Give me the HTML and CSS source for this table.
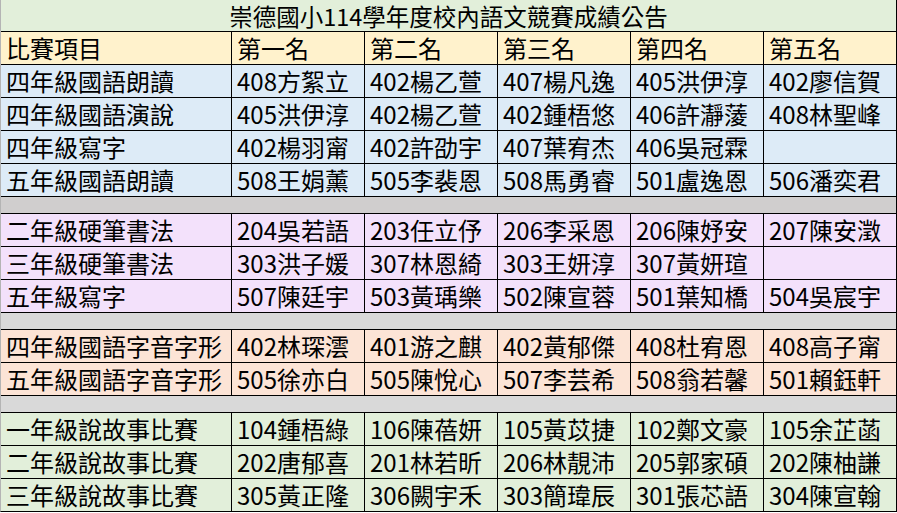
FILE: index.html
```html
<!DOCTYPE html>
<html lang="zh-Hant">
<head>
<meta charset="utf-8">
<title>崇德國小114學年度校內語文競賽成績公告</title>
<link rel="stylesheet" href="styles.css">
</head>
<body>
<div class="sheet">
  <div class="title">崇德國小114學年度校內語文競賽成績公告</div>

  <div class="c head">比賽項目</div><div class="c head">第一名</div><div class="c head">第二名</div><div class="c head">第三名</div><div class="c head">第四名</div><div class="c head">第五名</div>

  <div class="c blue">四年級國語朗讀</div><div class="c blue">408方絮立</div><div class="c blue">402楊乙萱</div><div class="c blue">407楊凡逸</div><div class="c blue">405洪伊淳</div><div class="c blue">402廖信賀</div>
  <div class="c blue">四年級國語演說</div><div class="c blue">405洪伊淳</div><div class="c blue">402楊乙萱</div><div class="c blue">402鍾梧悠</div><div class="c blue">406許瀞蔆</div><div class="c blue">408林聖峰</div>
  <div class="c blue">四年級寫字</div><div class="c blue">402楊羽甯</div><div class="c blue">402許劭宇</div><div class="c blue">407葉宥杰</div><div class="c blue">406吳冠霖</div><div class="c blue"></div>
  <div class="c blue">五年級國語朗讀</div><div class="c blue">508王娟薰</div><div class="c blue">505李裴恩</div><div class="c blue">508馬勇睿</div><div class="c blue">501盧逸恩</div><div class="c blue">506潘奕君</div>

  <div class="gap g1"></div>

  <div class="c pink">二年級硬筆書法</div><div class="c pink">204吳若語</div><div class="c pink">203任立伃</div><div class="c pink">206李采恩</div><div class="c pink">206陳妤安</div><div class="c pink">207陳安澂</div>
  <div class="c pink">三年級硬筆書法</div><div class="c pink">303洪子媛</div><div class="c pink">307林恩綺</div><div class="c pink">303王妍淳</div><div class="c pink">307黃妍瑄</div><div class="c pink"></div>
  <div class="c pink">五年級寫字</div><div class="c pink">507陳廷宇</div><div class="c pink">503黃瑀樂</div><div class="c pink">502陳宣蓉</div><div class="c pink">501葉知橋</div><div class="c pink">504吳宸宇</div>

  <div class="gap"></div>

  <div class="c peach">四年級國語字音字形</div><div class="c peach">402林琛澐</div><div class="c peach">401游之麒</div><div class="c peach">402黃郁傑</div><div class="c peach">408杜宥恩</div><div class="c peach">408高子甯</div>
  <div class="c peach">五年級國語字音字形</div><div class="c peach">505徐亦白</div><div class="c peach">505陳悅心</div><div class="c peach">507李芸希</div><div class="c peach">508翁若馨</div><div class="c peach">501賴鈺軒</div>

  <div class="gap"></div>

  <div class="c green">一年級說故事比賽</div><div class="c green">104鍾梧綠</div><div class="c green">106陳蓓妍</div><div class="c green">105黃苡捷</div><div class="c green">102鄭文豪</div><div class="c green">105余芷菡</div>
  <div class="c green">二年級說故事比賽</div><div class="c green">202唐郁喜</div><div class="c green">201林若昕</div><div class="c green">206林靚沛</div><div class="c green">205郭家碩</div><div class="c green">202陳柚謙</div>
  <div class="c green">三年級說故事比賽</div><div class="c green">305黃正隆</div><div class="c green">306闕宇禾</div><div class="c green">303簡瑋辰</div><div class="c green">301張芯語</div><div class="c green">304陳宣翰</div>
</div>
</body>
</html>
```

FILE: styles.css
```css
html, body {
  margin: 0;
  padding: 0;
  background: #ffffff;
}

.sheet {
  width: 897px;
  box-sizing: border-box;
  display: grid;
  grid-template-columns: 230px repeat(5, 132px);
  grid-auto-rows: auto;
  gap: 1px;
  background: #000000;
  border-left: 1px solid #b4b4b4;
  border-right: 1px solid #000000;
  border-bottom: 1px solid #000000;
  font-family: "Noto Sans CJK TC", "Noto Sans CJK SC", sans-serif;
  color: #000000;
}

.title {
  grid-column: 1 / -1;
  height: 31px;
  background: #e2efda;
  text-align: center;
  font-size: 23.5px;
  line-height: 32px;
  white-space: nowrap;
}

.c {
  height: 32px;
  font-size: 24px;
  line-height: 32px;
  padding-left: 5px;
  white-space: nowrap;
}

.head { background: #fff2cc; }
.blue { background: #ddebf7; }
.pink { background: #f3e1fb; }
.peach { background: #fce4d6; }
.green { background: #e2efda; }

.gap {
  grid-column: 1 / -1;
  height: 16px;
  background: #d9d9d9;
}

.g1 { background: #d0cece; }
```
